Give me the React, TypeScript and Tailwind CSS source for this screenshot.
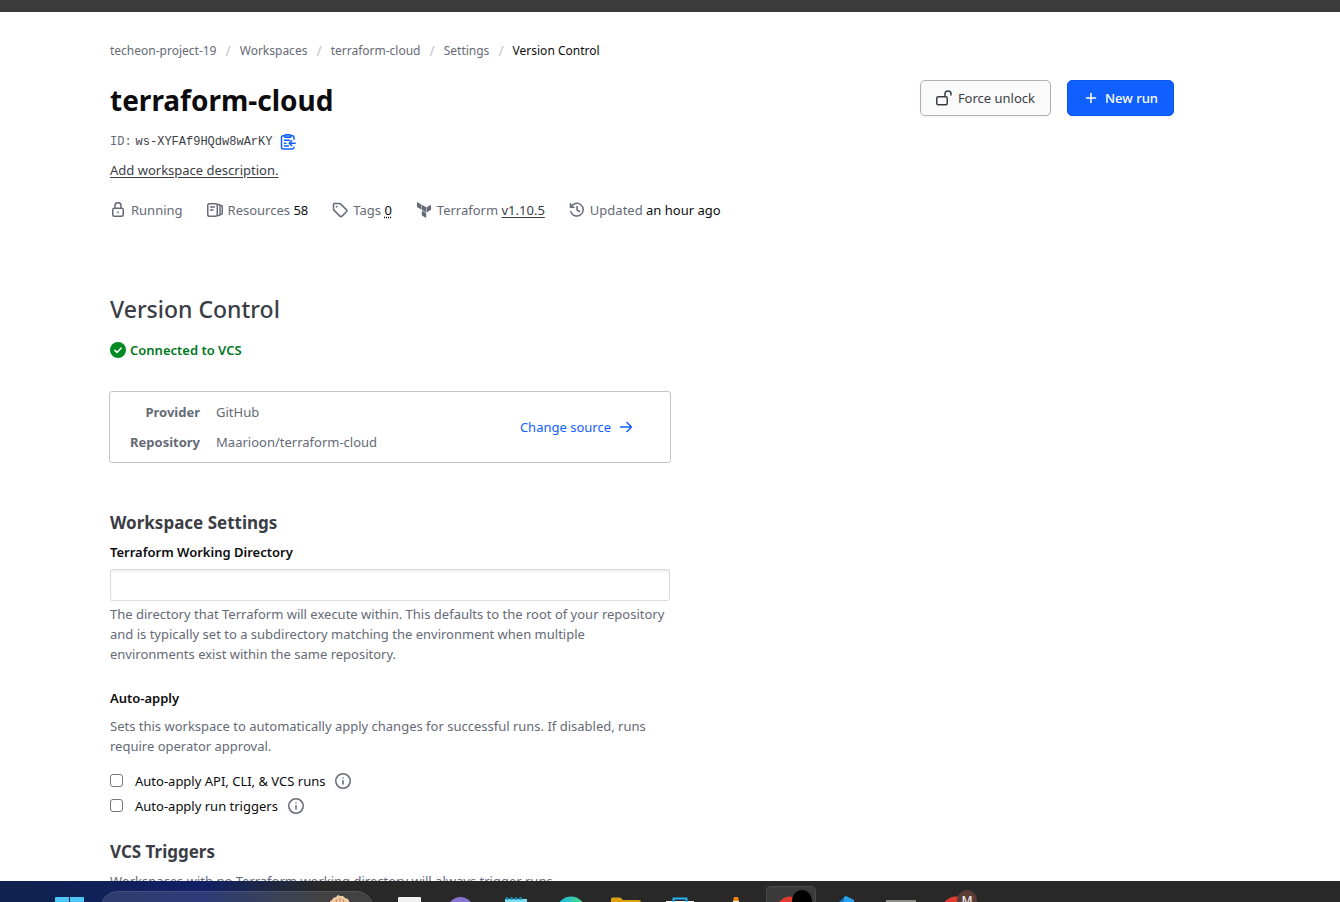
import { Fragment, type ReactNode } from "react";
import { SiTerraform } from "react-icons/si";

const stroke = {
  fill: "none",
  stroke: "currentColor",
  strokeWidth: 1.5,
  strokeLinecap: "round" as const,
  strokeLinejoin: "round" as const,
};

function Icon({ children, className = "" }: { children: ReactNode; className?: string }) {
  return (
    <svg viewBox="0 0 16 16" className={`size-4 shrink-0 ${className}`} aria-hidden="true" {...stroke}>
      {children}
    </svg>
  );
}

const LockIcon = () => (
  <Icon>
    <rect x="2.75" y="6.25" width="10.5" height="8" rx="1.5" />
    <path d="M5 6V3.700a3 3 0 0 1 6 0V6M8 10v.8" />
  </Icon>
);

const UnlockIcon = () => (
  <Icon>
    <rect x="0.75" y="6.75" width="10.5" height="8" rx="1.5" />
    <path d="M9 6.5V4a3 3 0 0 1 6 0v1" />
  </Icon>
);

const ResourcesIcon = () => (
  <Icon>
    <rect x="0.75" y="1.75" width="9.5" height="12.5" rx="1.5" />
    <path d="M3.500 5h4M3.500 8h2.500M11 2.500h1c.7 0 1 .4 1 1v9c0 .6-.3 1-1 1h-1M13.500 3.500h.5c.8 0 1.300.5 1.300 1.200v6.600c0 .7-.5 1.200-1.300 1.200h-.5" />
  </Icon>
);

const TagIcon = () => (
  <Icon>
    <path d="M1.500 2.200v4.900c0 .4.2.8.4 1l6 6a1.500 1.500 0 0 0 2.100 0l4.400-4.400a1.500 1.500 0 0 0 0-2.100l-6-5.700a1.500 1.500 0 0 0-1-.4H2.200a.7.7 0 0 0-.7.7z" />
    <path d="M4.600 4.700h.01" strokeWidth="1.8" />
  </Icon>
);

const HistoryIcon = () => (
  <Icon>
    <path d="M1.500 1.800v3.500h3.500M1.900 5.200A6.400 6.400 0 1 1 1.700 9.600M8 4.500V8l2.500 1.500" />
  </Icon>
);

const CopyIcon = () => (
  <Icon>
    <path d="M4.500 1.800H3.200A1.700 1.700 0 0 0 1.500 3.500v9.800A1.700 1.700 0 0 0 3.200 15h9.100a1.700 1.700 0 0 0 1.700-1.700M11 1.800h1.300A1.700 1.700 0 0 1 14 3.500v1.800" />
    <rect x="4.700" y="0.800" width="6.100" height="2.500" rx=".8" fill="#8cb1ff" />
    <path d="M4.400 6.300h5.200M4.400 9.200h1.500M4.400 12h4M15.200 9.200H9.400M11.700 6.800 9.200 9.200l2.500 2.400" />
  </Icon>
);

const InfoIcon = () => (
  <Icon>
    <circle cx="8" cy="8" r="7.250" />
    <path d="M8 7.700v3.200M8 5h.01" strokeWidth="1.600" />
  </Icon>
);

const CheckIcon = () => (
  <Icon className="text-[#008a22]">
    <circle cx="8" cy="8" r="8" fill="currentColor" stroke="none" />
    <path d="M4.800 8.400 7 10.400 11.200 6" stroke="#fff" />
  </Icon>
);

const crumbs = ["techeon-project-19", "Workspaces", "terraform-cloud", "Settings"];

function Meta({ icon, children }: { icon: ReactNode; children: ReactNode }) {
  return (
    <li className="flex items-center gap-[5px]">
      {icon}
      <span>{children}</span>
    </li>
  );
}

function AutoApply({ id, label }: { id: string; label: string }) {
  return (
    <div className="flex h-[25px] items-center">
      <input
        id={id}
        type="checkbox"
        className="mr-3 size-[13px] appearance-none rounded-[3px] border border-[#767676] bg-white checked:bg-[#1060ff]"
      />
      <label htmlFor={id} className="text-[#0c0c0e]">
        {label}
      </label>
      <button type="button" aria-label={`About ${label}`} className="ml-2.5 text-[#656a76]">
        <InfoIcon />
      </button>
    </div>
  );
}

const apps: { name: string; active?: boolean; art: ReactNode }[] = [
  { name: "Task view", art: <rect x="20" y="16" width="23" height="6" rx="1" fill="#f1f1f1" /> },
  { name: "Chat", art: <circle cx="27.500" cy="29" r="13" fill="#8575cf" /> },
  {
    name: "Notepad",
    art: (
      <>
        <rect x="17" y="18" width="22" height="4" fill="#83dcf5" />
        <path d="M19 17.500h18" stroke="#1193b8" strokeWidth="3" strokeLinecap="round" strokeDasharray="0.1 4.400" />
      </>
    ),
  },
  {
    name: "Browser",
    art: (
      <>
        <defs>
          <linearGradient id="wave">
            <stop offset="0.1" stopColor="#1bb5ea" />
            <stop offset="0.9" stopColor="#48dc86" />
          </linearGradient>
        </defs>
        <circle cx="28" cy="30" r="14.500" fill="url(#wave)" />
      </>
    ),
  },
  { name: "Files", art: <path d="M13 22v-4q0-1.500 1.500-1.500h7q1 0 2 1l1.500 1.500H41q2 0 2 3z" fill="#dda10f" /> },
  {
    name: "Store",
    art: (
      <>
        <path d="M13 20h28v2H13z" fill="#f5f5f5" />
        <path d="M20.500 22v-4.500h13V22" fill="none" stroke="#28b4ee" strokeWidth="2" />
      </>
    ),
  },
  {
    name: "Media player",
    art: (
      <>
        <path d="M26 16h4l1.500 6h-7z" fill="#f28410" />
        <path d="M25.500 20h5l.5 2h-6z" fill="#fff" />
      </>
    ),
  },
  {
    name: "Web, current window",
    active: true,
    art: (
      <>
        <circle cx="27.500" cy="30" r="14.500" fill="#e43b30" />
        <circle cx="39" cy="19" r="10" fill="#000" />
      </>
    ),
  },
  {
    name: "Editor",
    art: (
      <>
        <path d="M20 22l7-6.500V22z" fill="#1479c4" />
        <path d="M26 16l2-1 8 4v3H26z" fill="#27a3f2" />
      </>
    ),
  },
  { name: "Terminal", art: <path d="M13 22v-3h30v3z" fill="#8e8e88" /> },
  {
    name: "Web profile",
    art: (
      <>
        <circle cx="28" cy="30" r="14.500" fill="#e43b30" />
        <circle cx="39" cy="19" r="10" fill="#593c36" />
        <text x="39" y="24" fontSize="12" fontWeight="600" textAnchor="middle" fill="#e5dedb">
          M
        </text>
      </>
    ),
  },
];

function Taskbar() {
  return (
    <footer className="flex h-[21px] shrink-0 overflow-hidden bg-[#282828] bg-linear-to-r from-[#10224d] via-[#111f66] via-15% to-[#282828] to-24%">
      <button type="button" aria-label="Start" className="ml-[54px] h-[21px] w-8 shrink-0">
        <svg viewBox="0 0 32 21" className="h-[21px] w-8" aria-hidden="true">
          <path d="M1 17q0-1 1-1h13v5H1zM16 16h13q1 0 1 1v4H16z" fill="#4cc8f8" />
        </svg>
      </button>
      <button
        type="button"
        aria-label="Search"
        className="mt-[10px] ml-3.5 flex h-9 w-[274px] shrink-0 justify-end rounded-full border-t border-white/10 bg-white/12 pr-5"
      >
        <svg viewBox="0 0 26 11" className="h-[11px] w-[26px]" aria-hidden="true">
          <path d="M2 11V9l2-1 1-2 3-1 2-2 2 1 3 0 2 2 3 1 2 4z" fill="#f1c9a0" />
          <path d="M8 11l1-4M12 11V6M16 11l-1-4" stroke="#c98e66" />
        </svg>
      </button>
      <nav aria-label="Apps" className="ml-1 flex">
        {apps.map((app) => (
          <button key={app.name} type="button" aria-label={app.name} className="flex h-[21px] w-[55px] shrink-0">
            <svg viewBox="0 0 55 21" className="h-[21px] w-[55px]" aria-hidden="true">
              {app.active && <rect x="3.500" y="5.500" width="49" height="40" rx="4" fill="#3a3a3a" stroke="#4a4a4a" />}
              {app.art}
            </svg>
          </button>
        ))}
      </nav>
    </footer>
  );
}

export default function App() {
  return (
    <div className="flex h-screen flex-col bg-white font-['Noto_Sans','Open_Sans',sans-serif] text-[13px] leading-5 text-[#656a76]">
      <div className="h-3 shrink-0 bg-[#3b3b3b]" />
      <main className="min-h-0 flex-1 overflow-hidden pt-7 pr-[166px] pl-[110px]">
        <nav aria-label="Breadcrumb">
          <ol className="flex gap-[9px] text-xs leading-[22px]">
            {crumbs.map((c) => (
              <Fragment key={c}>
                <li>
                  <a href="#">{c}</a>
                </li>
                <li aria-hidden="true" className="text-sm leading-[22px] text-[#c2c5cb]">
                  /
                </li>
              </Fragment>
            ))}
            <li aria-current="page" className="text-[#0c0c0e]">
              Version Control
            </li>
          </ol>
        </nav>

        <header className="mt-[18px] flex items-start justify-between">
          <div>
            <h1 className="text-[28px] leading-10 font-bold text-[#0c0c0e]">terraform-cloud</h1>
            <div className="mt-3 flex h-5 items-center font-['Liberation_Mono',monospace] text-xs">
              <span>ID:</span>
              <span className="ml-1 text-[#3b3d45]">ws-XYFAf9HQdw8wArKY</span>
              <button type="button" aria-label="Copy ID" className="ml-2 text-[#1060ff]">
                <CopyIcon />
              </button>
            </div>
            <a href="#" className="mt-2 block text-[#3b3d45] underline underline-offset-2">
              Add workspace description.
            </a>
          </div>
          <div className="flex gap-4">
            <button
              type="button"
              className="flex h-9 items-center gap-1.5 rounded-[5px] border border-[#afb0b3] bg-[#fafafa] px-[15px] text-[#3b3d45] shadow-xs"
            >
              <UnlockIcon />
              Force unlock
            </button>
            <button
              type="button"
              className="flex h-9 items-center gap-1.5 rounded-[5px] border border-[#0c56e9] bg-[#1060ff] px-[15px] font-medium text-white shadow-xs"
            >
              <Icon>
                <path d="M8 3.500v9M3.500 8h9" />
              </Icon>
              New run
            </button>
          </div>
        </header>

        <ul className="mt-5 flex gap-6">
          <Meta icon={<LockIcon />}>Running</Meta>
          <Meta icon={<ResourcesIcon />}>
            Resources <span className="text-[#0c0c0e]">58</span>
          </Meta>
          <Meta icon={<TagIcon />}>
            Tags <span className="text-[#0c0c0e] underline decoration-dotted underline-offset-2">0</span>
          </Meta>
          <Meta icon={<SiTerraform className="size-4 shrink-0" aria-hidden="true" />}>
            Terraform{" "}
            <a href="#" className="text-[#3b3d45] underline underline-offset-2">
              v1.10.5
            </a>
          </Meta>
          <Meta icon={<HistoryIcon />}>
            Updated <span className="text-[#0c0c0e]">an hour ago</span>
          </Meta>
        </ul>

        <div className="max-w-[560px]">
          <h2 className="mt-[73px] text-[23px] leading-8 font-medium text-[#3b3d45]">Version Control</h2>
          <p className="mt-[15px] flex items-center gap-1 font-semibold text-[#00781e]">
            <CheckIcon />
            Connected to VCS
          </p>

          <section className="mt-[31px] -mr-px -ml-px flex items-center justify-between rounded-[3px] border border-[#c2c5cb] py-[10px] pr-9 pl-5">
            <dl className="grid grid-cols-[auto_auto] gap-x-4 gap-y-2.5">
              <dt className="text-right font-bold">Provider</dt>
              <dd>GitHub</dd>
              <dt className="text-right font-bold">Repository</dt>
              <dd>Maarioon/terraform-cloud</dd>
            </dl>
            <a href="#" className="flex items-center gap-[7px] text-[#1060ff]">
              Change source
              <Icon>
                <path d="M2.500 8h11M9 3.500 13.500 8 9 12.500" />
              </Icon>
            </a>
          </section>

          <h3 className="mt-12 text-[17px] leading-6 font-bold text-[#3b3d45]">Workspace Settings</h3>
          <label htmlFor="working-dir" className="mt-[7px] block font-semibold text-[#0c0c0e]">
            Terraform Working Directory
          </label>
          <input
            id="working-dir"
            type="text"
            className="mt-[7px] block h-8 w-full rounded-[2px] border border-[#dcdcdc] px-2 shadow-[inset_0_2px_2px_#0000000f] outline-none"
          />
          <p className="mt-[3px]">
            The directory that Terraform will execute within. This defaults to the root of your repository and is
            typically set to a subdirectory matching the environment when multiple environments exist within the same
            repository.
          </p>

          <h4 className="mt-6 font-semibold text-[#0c0c0e]">Auto-apply</h4>
          <p className="mt-2">
            Sets this workspace to automatically apply changes for successful runs. If disabled, runs require operator
            approval.
          </p>
          <div className="mt-3">
            <AutoApply id="auto-runs" label="Auto-apply API, CLI, & VCS runs" />
            <AutoApply id="auto-triggers" label="Auto-apply run triggers" />
          </div>

          <h3 className="mt-[22px] text-[17px] leading-6 font-bold text-[#3b3d45]">VCS Triggers</h3>
          <p className="mt-[7px]">Workspaces with no Terraform working directory will always trigger runs.</p>
        </div>
      </main>
      <Taskbar />
    </div>
  );
}
